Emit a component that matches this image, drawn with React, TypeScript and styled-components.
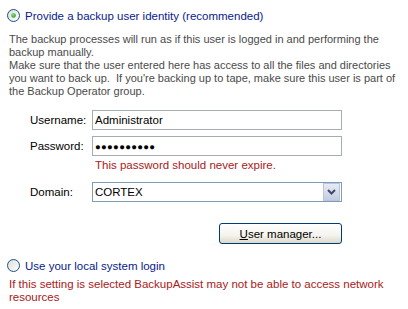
import { createGlobalStyle, styled } from "styled-components";

const GlobalStyle = createGlobalStyle`
  body {
    margin: 0;
    background: #ffffff;
    font-family: "Liberation Sans", Arial, sans-serif;
    font-size: 11px;
  }
`;

const Page = styled.div`
  width: 408px;
  height: 309px;
  padding: 9px 0 0 7px;
  box-sizing: border-box;
`;

const RadioRow = styled.label`
  display: flex;
  align-items: center;
  gap: 5px;
  height: 13px;
  color: #0a1a8c;
  font-size: 11.5px;
`;

const Description = styled.div`
  margin: 11px 0 0 2px;
  color: #4a4a4a;
  line-height: 13px;
  width: 395px;
`;

const Form = styled.div`
  display: grid;
  grid-template-columns: 62px 250px;
  margin: 12px 0 0 23px;
  align-items: center;
`;

const Label = styled.span`
  color: #000;
  font-size: 11.5px;
`;

const Field = styled.div<{ $blue?: boolean }>`
  height: 20px;
  box-sizing: border-box;
  border: 1px solid ${(p) => (p.$blue ? "#7f9db9" : "#a5acb2")};
  display: flex;
  align-items: center;
  padding: 0 2px;
  font-size: 11.5px;
  color: #000;
  background: #fff;
`;

const Spacer = styled.div<{ $h: number }>`
  grid-column: 1 / 3;
  height: ${(p) => p.$h}px;
`;

const Hint = styled.div`
  grid-column: 2;
  color: #a8201a;
  font-size: 11.5px;
  padding: 3px 0 0 3px;
  height: 17px;
  box-sizing: border-box;
`;

const Dots = styled.span`
  font-size: 9.5px;
  letter-spacing: 0.3px;
`;

const DropButton = styled.div`
  margin-left: auto;
  margin-right: -1px;
  width: 17px;
  height: 18px;
  box-sizing: border-box;
  border: 1px solid #b9c4dd;
  background: linear-gradient(#e8ebf6, #c5cbe2);
  display: flex;
  align-items: center;
  justify-content: center;
`;

const ButtonRow = styled.div`
  grid-column: 2;
  display: flex;
  justify-content: flex-end;
`;

const XPButton = styled.button`
  width: 123px;
  height: 21px;
  border: 1px solid #003c74;
  border-radius: 3px;
  background: linear-gradient(#ffffff, #f4f3ee 60%, #dcd8c9);
  font-family: "Liberation Sans", Arial, sans-serif;
  font-size: 11.5px;
  color: #000;
  padding: 0;
`;

const SecondRadio = styled(RadioRow)`
  margin-top: 15px;
`;

const Warning = styled.div`
  margin: 6px 0 0 2px;
  color: #a8201a;
  font-size: 11.5px;
  line-height: 13px;
  width: 390px;
`;

function Radio({ checked }: { checked?: boolean }) {
  const id = checked ? "rg1" : "rg2";
  return (
    <svg width="13" height="13" viewBox="0 0 13 13">
      <defs>
        <linearGradient id={id} x1="0" y1="0" x2="1" y2="1">
          <stop offset="0" stopColor="#dcdcd7" />
          <stop offset="1" stopColor="#ffffff" />
        </linearGradient>
        <radialGradient id="dot" cx="0.4" cy="0.4" r="0.6">
          <stop offset="0" stopColor="#8ee08c" />
          <stop offset="1" stopColor="#21a121" />
        </radialGradient>
      </defs>
      <circle cx="6.5" cy="6.5" r="6" fill={`url(#${id})`} stroke="#1c5180" strokeWidth="1" />
      {checked && <circle cx="6.5" cy="6.5" r="2.3" fill="url(#dot)" />}
    </svg>
  );
}

function App() {
  return (
    <Page>
      <GlobalStyle />
      <RadioRow>
        <Radio checked />
        Provide a backup user identity (recommended)
      </RadioRow>
      <Description>
        The backup processes will run as if this user is logged in and performing the backup manually.
        <br />
        Make sure that the user entered here has access to all the files and directories you want to back up.&nbsp; If you're backing up to tape, make sure this user is part of the Backup Operator group.
      </Description>
      <Form>
        <Label>Username:</Label>
        <Field>Administrator</Field>
        <Spacer $h={6} />
        <Label>Password:</Label>
        <Field>
          <Dots>●●●●●●●●●●</Dots>
        </Field>
        <span />
        <Hint>This password should never expire.</Hint>
        <Spacer $h={9} />
        <Label>Domain:</Label>
        <Field $blue>
          CORTEX
          <DropButton>
            <svg width="9" height="6" viewBox="0 0 9 6">
              <path d="M1 1 L4.5 4.5 L8 1" fill="none" stroke="#3f4a66" strokeWidth="2" />
            </svg>
          </DropButton>
        </Field>
        <Spacer $h={21} />
        <span />
        <ButtonRow>
          <XPButton>
            <u>U</u>ser manager...
          </XPButton>
        </ButtonRow>
      </Form>
      <SecondRadio>
        <Radio />
        Use your local system login
      </SecondRadio>
      <Warning>If this setting is selected BackupAssist may not be able to access network resources</Warning>
    </Page>
  );
}

export default App;
